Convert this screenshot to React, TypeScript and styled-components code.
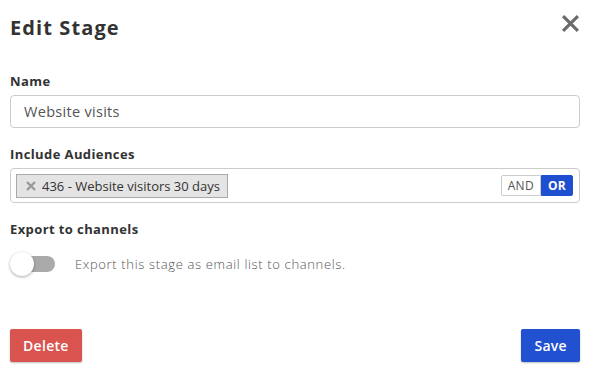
import React, { useState } from 'react'
import styled, { createGlobalStyle } from 'styled-components'

const GlobalStyle = createGlobalStyle`
  body {
    margin: 0;
    background: #fff;
    font-family: 'Open Sans', 'Liberation Sans', sans-serif;
    color: #333;
  }
`

const Modal = styled.div`
  width: 593px;
  height: 372px;
  box-sizing: border-box;
  padding: 0 13px 0 10px;
  display: flex;
  flex-direction: column;
`

const Header = styled.div`
  display: flex;
  align-items: center;
  justify-content: space-between;
  height: 54px;
`

const Title = styled.h2`
  margin: 0;
  font-size: 20px;
  font-weight: 700;
  color: #333;
  letter-spacing: 1.1px;
`

const CloseButton = styled.button`
  align-self: flex-start;
  margin-top: 13px;
  margin-right: -1px;
  border: none;
  background: none;
  padding: 0;
  width: 21px;
  height: 21px;
  display: flex;
  align-items: center;
  justify-content: center;
  cursor: pointer;
`

const Label = styled.div<{ $first?: boolean }>`
  font-size: 13px;
  font-weight: 700;
  color: #333;
  letter-spacing: 0.4px;
  margin-top: ${p => (p.$first ? 19 : 18)}px;
  margin-bottom: 6px;
  line-height: 16px;
`

const TextInput = styled.input`
  box-sizing: border-box;
  width: 100%;
  height: 33px;
  border: 1px solid #ccc;
  border-radius: 4px;
  padding: 0 13px;
  font-family: inherit;
  font-size: 14.5px;
  letter-spacing: 0.3px;
  color: #555;
  outline: none;
`

const MultiBox = styled.div`
  box-sizing: border-box;
  height: 35px;
  border: 1px solid #ccc;
  border-radius: 4px;
  padding: 0 5px;
  display: flex;
  align-items: center;
  justify-content: space-between;
`

const Chip = styled.span`
  display: inline-flex;
  align-items: center;
  gap: 6px;
  height: 24px;
  box-sizing: border-box;
  padding: 0 7px 0 9px;
  background: #e4e4e4;
  border: 1px solid #aaa;
  font-size: 13px;
  color: #333;
`

const ChipRemove = styled.span`
  display: inline-flex;
`

const Switcher = styled.div`
  display: flex;
  height: 21px;
  margin-right: 1px;
`

const SwitchButton = styled.button<{ $active?: boolean }>`
  box-sizing: border-box;
  height: 21px;
  padding: 0 6px;
  font-family: inherit;
  font-size: 12px;
  letter-spacing: 0.3px;
  font-weight: ${p => (p.$active ? 700 : 400)};
  color: ${p => (p.$active ? '#fff' : '#555')};
  background: ${p => (p.$active ? '#1f4fd1' : '#fff')};
  border: 1px solid ${p => (p.$active ? '#1f4fd1' : '#ccc')};
  border-radius: ${p => (p.$active ? '0 2px 2px 0' : '2px 0 0 2px')};
  cursor: pointer;
`

const ToggleRow = styled.div`
  display: flex;
  align-items: center;
  gap: 20px;
  margin-top: 7px;
  height: 28px;
`

const Toggle = styled.div`
  position: relative;
  width: 45px;
  height: 28px;
  display: flex;
  align-items: center;
`

const Track = styled.div`
  margin-left: 10px;
  width: 35px;
  height: 16px;
  border-radius: 8px;
  background: #aaa;
`

const Knob = styled.div`
  position: absolute;
  left: 0;
  top: 2px;
  width: 24px;
  height: 24px;
  border-radius: 50%;
  background: #fff;
  box-shadow: 0 1px 3px rgba(0, 0, 0, 0.35);
`

const ToggleText = styled.span`
  font-size: 13px;
  font-weight: 300;
  letter-spacing: 0.65px;
  color: #555;
`

const Footer = styled.div`
  margin-top: auto;
  margin-bottom: 10px;
  display: flex;
  justify-content: space-between;
`

const ActionButton = styled.button<{ $variant: 'danger' | 'primary' }>`
  height: 33px;
  padding: 0 13px;
  border: none;
  border-radius: 2px;
  font-family: inherit;
  font-size: 14px;
  font-weight: 600;
  letter-spacing: 0.3px;
  color: #fff;
  background: ${p => (p.$variant === 'danger' ? '#d9534f' : '#2150d0')};
  box-shadow: 0 1px 2px rgba(0, 0, 0, 0.25);
  cursor: pointer;
`

export default function App() {
  const [mode, setMode] = useState<'AND' | 'OR'>('OR')

  return (
    <>
      <GlobalStyle />
      <Modal>
        <Header>
          <Title>Edit Stage</Title>
          <CloseButton aria-label="Close">
            <svg width="19" height="19" viewBox="0 0 18 18">
              <path d="M2 2 L16 16 M16 2 L2 16" stroke="#6b6b6b" strokeWidth="3" />
            </svg>
          </CloseButton>
        </Header>

        <Label $first>Name</Label>
        <TextInput defaultValue="Website visits" />

        <Label>Include Audiences</Label>
        <MultiBox>
          <Chip>
            <ChipRemove>
              <svg width="10" height="10" viewBox="0 0 10 10">
                <path d="M1 1 L9 9 M9 1 L1 9" stroke="#999" strokeWidth="2.4" />
              </svg>
            </ChipRemove>
            436 - Website visitors 30 days
          </Chip>
          <Switcher>
            <SwitchButton $active={mode === 'AND'} onClick={() => setMode('AND')}>AND</SwitchButton>
            <SwitchButton $active={mode === 'OR'} onClick={() => setMode('OR')}>OR</SwitchButton>
          </Switcher>
        </MultiBox>

        <Label>Export to channels</Label>
        <ToggleRow>
          <Toggle>
            <Track />
            <Knob />
          </Toggle>
          <ToggleText>Export this stage as email list to channels.</ToggleText>
        </ToggleRow>

        <Footer>
          <ActionButton $variant="danger">Delete</ActionButton>
          <ActionButton $variant="primary">Save</ActionButton>
        </Footer>
      </Modal>
    </>
  )
}
